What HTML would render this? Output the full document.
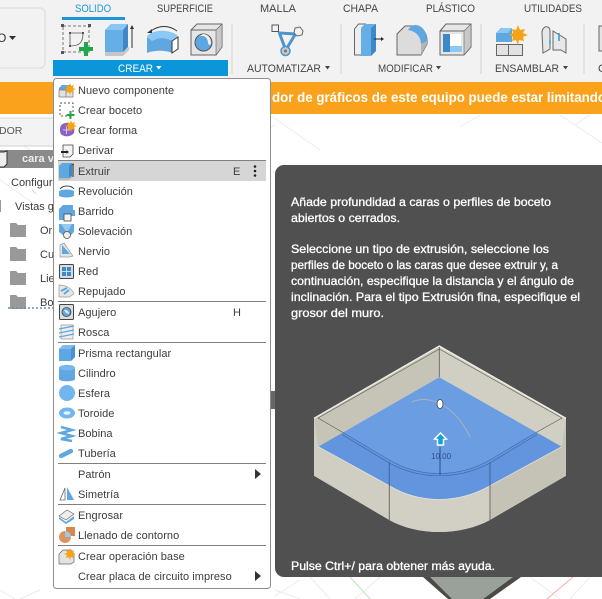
<!DOCTYPE html>
<html><head><meta charset="utf-8"><style>
html,body{margin:0;padding:0;background:#fff}
#p{position:relative;width:602px;height:599px;overflow:hidden;font-family:"Liberation Sans",sans-serif;background:#fff}
#p svg{position:absolute;left:0;top:0}
text{font-family:"Liberation Sans",sans-serif}
.m text{font-size:11px;fill:#3c3c3c;letter-spacing:.05px}
.tt text{font-size:12px;fill:#fff;stroke:#fff;stroke-width:.3px}
.tb text{font-size:11px;fill:#444}
</style></head><body><div id="p">
<svg width="602" height="599" viewBox="0 0 602 599">
<defs><clipPath id="bl"><path d="M439.300 377.300L561.700 446.700 490 485.700C458 504 420 504 389.300 485.700L318.300 446.700z"/></clipPath></defs>
<!-- canvas grid -->
<g stroke="#ececec" stroke-width="1" fill="none">
<path d="M0 130L60 170M0 180L50 215M270 115L320 150M560 115L602 143M275 125L250 140M480 115L460 127M590 115L575 125M40 590L20 599M0 590L15 599M275 590L300 599M300 580L275 596M310 577L330 599M380 577L355 599M530 577L560 599M590 577L570 599"/>
</g>
<path d="M10 160l5 4M32 190l4 4" stroke="#b7e6b7"/>
<path d="M350 577l20 22" stroke="#b8e6b8" stroke-width="1"/>
<path d="M573 577l-26 22" stroke="#f2b0b0" stroke-width="1"/>
<!-- dark shape beneath tooltip -->
<path d="M428 577h85l-30 22h-33z" fill="#9aa09a"/>
<path d="M423 577h7l22 22h-4z" fill="#4c4a44"/>
<path d="M513 577h8l-31 22h-7z" fill="#4c4a44"/>
<rect x="271" y="391" width="4" height="18" fill="#666"/>
<!-- toolbar -->
<rect x="0" y="0" width="602" height="82" fill="#f2f2f2"/>
<rect x="-10" y="8" width="55" height="60" rx="5" fill="#f2f2f2" stroke="#e2e2e2" stroke-width="1.5"/>
<text x="-3" y="42" font-size="12" fill="#333">O</text>
<path d="M9 36h7l-3.500 4z" fill="#333"/>
<g class="tb">
<text x="75" y="12" style="fill:#1c96d8" textLength="36" lengthAdjust="spacingAndGlyphs">SOLIDO</text>
<text x="157" y="12" textLength="56" lengthAdjust="spacingAndGlyphs">SUPERFICIE</text>
<text x="260" y="12" textLength="36" lengthAdjust="spacingAndGlyphs">MALLA</text>
<text x="343" y="12" textLength="35" lengthAdjust="spacingAndGlyphs">CHAPA</text>
<text x="426" y="12" textLength="49" lengthAdjust="spacingAndGlyphs">PLÁSTICO</text>
<text x="524" y="12" textLength="58" lengthAdjust="spacingAndGlyphs">UTILIDADES</text>
<text x="247" y="72" textLength="74" lengthAdjust="spacingAndGlyphs">AUTOMATIZAR</text>
<text x="378" y="72" textLength="55" lengthAdjust="spacingAndGlyphs">MODIFICAR</text>
<text x="495" y="72" textLength="64" lengthAdjust="spacingAndGlyphs">ENSAMBLAR</text>
<text x="598" y="72">C</text>
</g>
<rect x="62" y="17" width="63" height="3" fill="#1c96d8"/>
<path d="M325 66h5l-2.500 3.500zM436 66h5l-2.500 3.500zM563 66h5l-2.500 3.500z" fill="#444"/>
<path d="M232 24v50M341 24v50M481 24v50M584 24v50" stroke="#dcdcdc" stroke-width="1.500"/>
<rect x="53" y="60" width="175" height="16" fill="#0a96d8"/>
<text x="118" y="72" font-size="11" fill="#fff" textLength="35" lengthAdjust="spacingAndGlyphs">CREAR</text>
<path d="M156 66h5.500l-2.750 3.500z" fill="#fff"/>
<!-- Create sketch -->
<g>
<rect x="63" y="26" width="26" height="26" fill="none" stroke="#777" stroke-dasharray="3 2"/>
<path d="M70 33h13c0 10-4 13-13 13z" fill="none" stroke="#555" stroke-width=".8"/>
<path d="M61 24h3v3h-3zM88 24h3v3h-3zM61 51h3v3h-3zM69 32h2v2h-2zM82 32h2v2h-2zM69 45h2v2h-2z" fill="#555"/>
<path d="M84 42h4v5h5v4h-5v5h-4v-5h-5v-4h5z" fill="#1fa84a"/>
</g>
<!-- Extrude -->
<path d="M105 30l6-6h17v23l-5 5h-18z" fill="#66aee6"/>
<path d="M105 30l6-6h17l-5 6z" fill="#8bc6f2"/><path d="M123 30l5-6v23l-5 5z" fill="#3f88c8"/>
<path d="M105 52h18l6-5v3l-6 6h-18z" fill="#c6c6c6"/>
<path d="M132 48V27" stroke="#333" stroke-width="1"/><path d="M130 29l2-4 2 4z" fill="#333"/>
<!-- Revolve -->
<path d="M147 36c6-7 24-7 31 0l-6 5c-6-4-14-4-20 0z" fill="#8cc8f5"/>
<path d="M147 37c2 1 4 3 5 4 6-4 14-4 20 0v12c-6-3-18-3-25 0z" fill="#5ea7e0"/>
<path d="M172 41l6-4v12l-6 4z" fill="#fff" stroke="#333"/>
<path d="M151 31c8-6 18-6 26 0" fill="none" stroke="#333"/><path d="M147 33l5-4 0 4z" fill="#333"/>
<!-- Hole -->
<path d="M191 30l6-6h25v23l-6 8h-25z" fill="#e6e6e6" stroke="#666"/>
<path d="M216 30l6-6v23l-6 8z" fill="#c8c8c8" stroke="#666" stroke-width=".6"/>
<path d="M216 30h-25" stroke="#666"/>
<circle cx="203.500" cy="42.500" r="8.500" fill="#5ea7e0" stroke="#555"/><path d="M198 37c5-3 10 0 10 6 0 2 3 3 3 0 0-5-3-9-8-9z" fill="#f0f0f0"/>
<!-- Automatizar -->
<g fill="none" stroke="#4f94cf" stroke-width="3"><path d="M279 32L285 48M296 33L287 48M279 33L296 34"/></g>
<path d="M283 37h6l-3 7z" fill="#f2f2f2"/>
<rect x="272" y="25" width="6.500" height="6.500" fill="#f2f2f2" stroke="#555"/><path d="M295 28l5-1 3 4-1 4-5 1-3-3z" fill="#f2f2f2" stroke="#666"/><circle cx="285.500" cy="51" r="4.500" fill="#c8c8c8" stroke="#4f94cf" stroke-width="1.500"/><circle cx="285.500" cy="51" r="1.500" fill="#777"/>
<!-- Modificar -->
<path d="M354.500 55V29l4-5h7v31z" fill="#eee" stroke="#666"/><path d="M361 28l4-4h11v27l-5 5h-10z" fill="#66aee6"/><path d="M371 28l5-4v27l-5 5z" fill="#3f88c8"/>
<path d="M374 39h8" stroke="#222"/><path d="M381 37l3 2-3 2z" fill="#222"/>
<path d="M397 55V34l8-8h9c8 0 13 7 13 15v3l-6 11z" fill="#dcdcdc" stroke="#666"/><path d="M421 55V44l6-3v3z" fill="#b4b4b4"/><path d="M408 30c2-3 5-5 7-5 8 0 12 8 12 16l-6 3c0-7-5-13-13-14z" fill="#5ea7e0"/>
<path d="M440 31l6-7h25v23l-7 8h-24z" fill="#e6e6e6" stroke="#666"/><path d="M464 31l7-7v23l-7 8z" fill="#c8c8c8" stroke="#666" stroke-width=".6"/><path d="M464 31h-24" stroke="#666"/>
<path d="M443 34h7v13h12v5h-19z" fill="#3f88c8"/><path d="M450 34h11v13h-11z" fill="#fff"/><path d="M450 46h12v6h-12z" fill="#8cc8f5"/>
<!-- Ensamblar -->
<path d="M496 33l5-5h11v14h-16z" fill="#5ea7e0"/><path d="M496 33h12l4-5h-10z" fill="#8cc8f5"/>
<path d="M496.500 44.500h12v11h-12zM508.500 44.500h14v11h-14z" fill="#e2e2e2" stroke="#666"/>
<path d="M518 25l2 5 5-1-2 4 5 2-5 2 1 4-5-1-1 5-2-5-4 1 1-4-4-2 4-2-1-4 4 1z" fill="#f5a418"/>
<path d="M542 33c0-8 8-8 8-2v18l-7 4zM553 31l13 8v14l-5-3-8 0z" fill="#e8e8e8" stroke="#666"/><path d="M550 40v4M559 33v8" stroke="#2a9bdb" stroke-width="1.500"/>
<path d="M599 26h6v25h-6z" fill="#e4e4e4" stroke="#666"/>
<!-- banner -->
<rect x="0" y="82" width="602" height="32" fill="#fba21c"/>
<text x="272" y="102" font-size="13.500" font-weight="700" fill="#fff" textLength="334" lengthAdjust="spacingAndGlyphs">dor de gráficos de este equipo puede estar limitando</text>
<!-- browser -->
<rect x="0" y="118" width="53" height="28" fill="#f3f3f3"/><path d="M0 118h53" stroke="#d8d8d8"/><path d="M0 146h53" stroke="#d0d0d0"/>
<text x="-1" y="134" font-size="10.500" fill="#555">DOR</text>
<rect x="0" y="150" width="53" height="18" fill="#8a8a8a"/>
<path d="M-4 152h8l3 -1v13l-3 3h-8z" fill="#eee" stroke="#333"/>
<text x="22" y="162" font-size="11" font-weight="700" fill="#eee">cara v</text>
<text x="11" y="186" font-size="11" fill="#3c3c3c">Configura</text>
<rect x="-4" y="200" width="5" height="12" fill="#999"/>
<text x="15" y="210" font-size="11" fill="#3c3c3c">Vistas g</text>
<g fill="#999"><path d="M10 223h6l2 2h8v12H10zM10 247h6l2 2h8v12H10zM10 271h6l2 2h8v12H10zM10 295h6l2 2h8v12H10z"/></g>
<g font-size="11" fill="#3c3c3c"><text x="40" y="234">Or</text><text x="40" y="258">Cu</text><text x="40" y="282">Lie</text><text x="40" y="306">Bo</text></g>
<path d="M8 308h45" stroke="#6f88b8" stroke-width="1.500" stroke-dasharray="2 2"/>
<!-- tooltip -->
<rect x="275" y="165" width="340" height="412" rx="9" fill="#505050"/>
<g class="tt">
<text x="291" y="206" textLength="260" lengthAdjust="spacingAndGlyphs">Añade profundidad a caras o perfiles de boceto</text>
<text x="291" y="222" textLength="109" lengthAdjust="spacingAndGlyphs">abiertos o cerrados.</text>
<text x="291" y="253" textLength="258" lengthAdjust="spacingAndGlyphs">Seleccione un tipo de extrusión, seleccione los</text>
<text x="291" y="269" textLength="267" lengthAdjust="spacingAndGlyphs">perfiles de boceto o las caras que desee extruir y, a</text>
<text x="291" y="285" textLength="283" lengthAdjust="spacingAndGlyphs">continuación, especifique la distancia y el ángulo de</text>
<text x="291" y="301" textLength="289" lengthAdjust="spacingAndGlyphs">inclinación. Para el tipo Extrusión fina, especifique el</text>
<text x="291" y="317" textLength="93" lengthAdjust="spacingAndGlyphs">grosor del muro.</text>
<text x="291" y="570" textLength="204" lengthAdjust="spacingAndGlyphs">Pulse Ctrl+/ para obtener más ayuda.</text>
</g>
<!-- isometric -->
<path d="M439.300 346L566 418.300V475.700L490 520C460 536 418 536 389.300 520L314 475.700V418.300z" fill="#cfccc0"/>
<path d="M439.300 346L314 418.300l4.300 28.400L439.300 377.300z" fill="#c6c3b7"/>
<path d="M439.300 346L566 418.300l-4.300 28.400L439.300 377.300z" fill="#d1cec3"/>
<path d="M314 418.300V475.700L389.300 520V486L318.300 446.700z" fill="#d0cdc2"/>
<path d="M566 418.300V475.700L490 520V486L561.700 446.700z" fill="#c5c2b6"/>
<path d="M389.300 485.700C420 504 458 504 490 485.700V520C460 536 418 536 389.300 520z" fill="#d2cfc4"/>
<path d="M439.300 377.300L561.700 446.700 490 485.700C458 504 420 504 389.300 485.700L318.300 446.700z" fill="#6b9de3"/>
<g clip-path="url(#bl)"><path d="M300 418L318 418 389.300 461C420 478 458 478 490 461L562 418H600V530H280z" fill="#6394de"/></g>
<path d="M318.300 446.700L389.300 485.700C420 504 458 504 490 485.700L561.700 446.700" fill="none" stroke="#e8e6da" stroke-width=".7"/>
<path d="M314 418.300L439.300 346 566 418.300" fill="none" stroke="#f2f0e6" stroke-width="1.300"/>
<path d="M439.300 349L318 418 342 432M537 432L562 418 439.300 349" fill="none" stroke="#5a5a52" stroke-width=".6"/>
<path d="M342 432L389.300 460C420 478 458 478 490 460L537 432" fill="none" stroke="#3d62a4" stroke-width=".6"/>
<path d="M342 434.500L389.300 463C420 480 458 480 490 463L537 434.500" fill="none" stroke="#3d62a4" stroke-width=".6"/>
<path d="M439.300 347v30" stroke="#5a5a52" stroke-width=".8"/>
<path d="M389.300 462v24M490 462v24" stroke="#44659c" stroke-width="1"/>
<path d="M389.300 486v34M490 486v34" stroke="#6d6c65" stroke-width="1"/>
<path d="M412 402c8-4 18-3 27 1 10 5 22 15 31 34" fill="none" stroke="#a8b0ba" stroke-width="1"/>
<ellipse cx="440" cy="404" rx="3" ry="4.500" fill="#fff" stroke="#444" stroke-width=".8"/>
<path d="M440 475v-28" stroke="#2b4f8a" stroke-width="1"/>
<path d="M440.500 433l6 6-3 .5v5.500h-6v-5.500l-3-.5z" fill="#11a0dc" stroke="#fff" stroke-width="1.500"/>
<text x="431" y="459" font-size="8" fill="#2d4f8c">10.00</text>
<!-- menu -->
<rect x="53.500" y="78.500" width="217" height="510" rx="3" fill="#fff" stroke="#8e8e8e"/>
<rect x="58" y="161" width="208" height="20" fill="#d6d6d6"/>
<path d="M58 160.500h208M58 301.500h208M58 342.500h208M58 463.500h208M58 504.500h208M58 545.500h208" stroke="#808080"/>
<g class="m">
<text x="78" y="94">Nuevo componente</text>
<text x="78" y="114">Crear boceto</text>
<text x="78" y="134">Crear forma</text>
<text x="78" y="154">Derivar</text>
<text x="78" y="175">Extruir</text><text x="233" y="175">E</text>
<text x="78" y="195">Revolución</text>
<text x="78" y="215">Barrido</text>
<text x="78" y="235">Solevación</text>
<text x="78" y="255">Nervio</text>
<text x="78" y="275">Red</text>
<text x="78" y="295">Repujado</text>
<text x="78" y="316">Agujero</text><text x="233" y="316">H</text>
<text x="78" y="336">Rosca</text>
<text x="78" y="357">Prisma rectangular</text>
<text x="78" y="377">Cilindro</text>
<text x="78" y="397">Esfera</text>
<text x="78" y="417">Toroide</text>
<text x="78" y="437">Bobina</text>
<text x="78" y="457">Tubería</text>
<text x="78" y="478">Patrón</text>
<text x="78" y="498">Simetría</text>
<text x="78" y="519">Engrosar</text>
<text x="78" y="539">Llenado de contorno</text>
<text x="78" y="560">Crear operación base</text>
<text x="78" y="580">Crear placa de circuito impreso</text>
</g>
<circle cx="255" cy="166.500" r="1.300" fill="#222"/><circle cx="255" cy="171" r="1.300" fill="#222"/><circle cx="255" cy="175.500" r="1.300" fill="#222"/>
<path d="M255 469l6 5-6 5zM255 571l6 5-6 5z" fill="#333"/>
<!-- menu icons -->
<path d="M59 88l3-3h9v8H59z" fill="#5ea7e0"/><path d="M59 90h7v7h-7zM66 90h7v7h-7z" fill="#e2e2e2" stroke="#777" stroke-width=".7"/>
<path d="M70 83l1 3 3-1-1 3 3 1-3 1 1 3-3-1-1 3-1-3-3 1 1-3-3-1 3-1-1-3 3 1z" fill="#f5a418"/>
<rect x="60" y="103" width="13" height="13" fill="none" stroke="#555" stroke-dasharray="2 2"/>
<path d="M69.500 111h2v3h3v2h-3v3h-2v-3h-3v-2h3z" fill="#1fa84a"/>
<path d="M60 129c0-5 5-7 9-6 4 2 6 6 5 10-3 4-9 4-12 2-2-1-2-4-2-6z" fill="#8b62c4"/><path d="M63 130h7M66.500 127v7" stroke="#d7c2f0"/>
<path d="M70 123l1 3 3-1-1 3 3 1-3 1 1 3-3-1-1 3-1-3-3 1 1-3-3-1 3-1-1-3 3 1z" fill="#f5a418" transform="translate(1 -3)"/>
<path d="M63 145h10v9l-3 3H63z" fill="#f4f4f4" stroke="#444" stroke-width=".8"/><path d="M61 151h6l-2-2 4 3-4 3 2-2h-6z" fill="#222"/>
<path d="M59 166l3-3h10v13l-3 2H59z" fill="#5ea7e0"/><path d="M69 166l3-3v13l-3 2z" fill="#3f88c8"/><path d="M59 178h10l3-2v2l-3 2H59z" fill="#bbb"/>
<path d="M73 177v-13" stroke="#222"/><path d="M72 165l1-2 1 2z" fill="#222"/>
<path d="M60 189c3-4 11-4 14 0" fill="none" stroke="#444"/><path d="M59 191c4-2 12-2 15 0v5c-4 2-11 2-15 0z" fill="#5ea7e0"/>
<path d="M59 209l4-4h10v5h-14zM59 210h16v6H66v4h-7z" fill="#5ea7e0"/><rect x="64" y="214" width="7" height="7" fill="#f4f4f4" stroke="#444" stroke-width=".8"/>
<path d="M59 224h15v8l-3 3h-8l-4-3z" fill="#5ea7e0"/><path d="M61 224h11l-5 9z" fill="#9ac9ef"/><circle cx="67" cy="235" r="3.500" fill="#eee" stroke="#555" stroke-width=".8"/>
<path d="M60 257v-12l4-2 9 13-3 1z" fill="#e4e4e4" stroke="#999" stroke-width=".7"/><path d="M62 254v-9l8 9z" fill="#5ea7e0"/>
<rect x="59.500" y="264.500" width="14" height="14" rx="1" fill="#ddd" stroke="#444"/><rect x="62" y="267" width="9" height="9" fill="#3f88c8"/><path d="M66.500 267v9M62 271.500h9" stroke="#bfe0f8"/>
<path d="M59 297v-12c6 0 13 3 15 9l-5 3z" fill="#e6e6e6" stroke="#999" stroke-width=".7"/><path d="M61 291l6-3M64 294l5-4" stroke="#5ea7e0" stroke-width="2"/>
<rect x="59.500" y="304.500" width="14" height="15" rx="1" fill="#ddd" stroke="#444"/><circle cx="66.500" cy="312" r="4.500" fill="#5ea7e0" stroke="#444" stroke-width=".8"/><path d="M64 310c2-1 5 1 5 4l-3-1z" fill="#e8e8e8"/>
<path d="M61 325h12v14H61z" fill="#eee" stroke="#999" stroke-width=".7"/><path d="M59 329l15-3M59 333l15-3M59 337l15-3" stroke="#5ea7e0" stroke-width="1.300"/>
<path d="M59 349l4-4h12v12l-4 4H59z" fill="#5ea7e0"/><path d="M59 349l4-4h12l-4 4z" fill="#7fbcee"/><path d="M71 349l4-4v12l-4 4z" fill="#4890cf"/>
<path d="M59 368c0-4 16-4 16 0v11c0 3-16 3-16 0z" fill="#5ea7e0"/><ellipse cx="67" cy="368" rx="8" ry="2.500" fill="#78b8ec"/>
<circle cx="67" cy="393" r="8" fill="#72b6f0"/>
<ellipse cx="67" cy="413" rx="8" ry="5.500" fill="#72b6f0"/><ellipse cx="67" cy="413" rx="3.500" ry="1.700" fill="#e8f4fd"/>
<path d="M61 427l11 3-11 3 11 3-11 3 11 2" fill="none" stroke="#5ea7e0" stroke-width="2.500"/>
<path d="M60 454l10-5c3-1 4 3 2 4l-10 5c-3 1-4-3-2-4z" fill="#5ea7e0"/>
<path d="M60 500l5-12v12z" fill="#fff" stroke="#666" stroke-width=".8"/><path d="M67 487v13h7z" fill="#5ea7e0"/>
<path d="M59 516l8-6 7 4-8 6z" fill="#eee" stroke="#666" stroke-width=".7"/><path d="M59 517l7 5 8-6v3l-8 5-7-5z" fill="#5ea7e0"/>
<rect x="66" y="527" width="9" height="9" fill="#d8864a"/><circle cx="65" cy="537" r="6" fill="#dc9460"/><path d="M65 531a6 6 0 0 1 6 6h-6z" fill="#9ac9ef"/>
<path d="M59 554l4-4h8l3 4v8l-3 2H59z" fill="#e2e2e2" stroke="#666" stroke-width=".7"/>
<path d="M70 548l1 3 3-1-1 3 3 1-3 1 1 3-3-1-1 3-1-3-3 1 1-3-3-1 3-1-1-3 3 1z" fill="#f5a418"/>
</svg>
</div></body></html>
